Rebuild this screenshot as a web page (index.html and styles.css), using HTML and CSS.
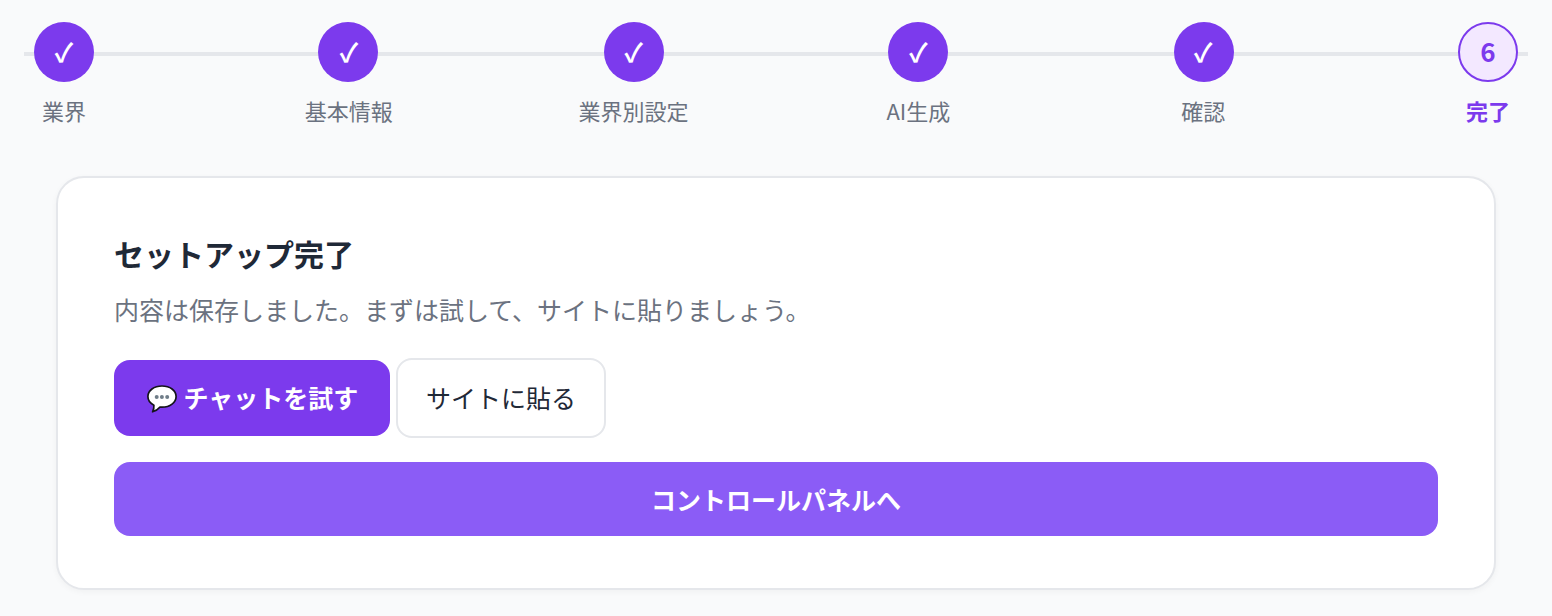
FILE: index.html
```html
<!DOCTYPE html>
<html lang="ja">
<head>
<meta charset="utf-8">
<title>セットアップ完了</title>
<link rel="stylesheet" href="styles.css">
</head>
<body>
<div class="page">
  <ol class="stepper">
    <li class="step done"><span class="dot">✓</span><span class="label">業界</span></li>
    <li class="step done"><span class="dot">✓</span><span class="label">基本情報</span></li>
    <li class="step done"><span class="dot">✓</span><span class="label">業界別設定</span></li>
    <li class="step done"><span class="dot">✓</span><span class="label">AI生成</span></li>
    <li class="step done"><span class="dot">✓</span><span class="label">確認</span></li>
    <li class="step active"><span class="dot">6</span><span class="label">完了</span></li>
  </ol>
  <section class="card">
    <h1 class="title">セットアップ完了</h1>
    <p class="desc">内容は保存しました。まずは試して、サイトに貼りましょう。</p>
    <div class="actions">
      <button class="btn btn-primary" type="button">
        <svg class="emoji" viewBox="0 0 30 30" width="30" height="30" aria-hidden="true">
          <path d="M15 3C7 3 .9 7.600 .9 13.600c0 3.900 2.500 6.900 6 8.600.2 2.200-.3 4.600-1.300 6.600 3-.8 5.600-2.400 7.400-4.700.7.100 1.300.1 2 .1 8 0 14.100-4.600 14.100-10.600S23 3 15 3z" fill="#fff" stroke="#14141a" stroke-width="1.700" stroke-linejoin="round"/>
          <circle cx="9.700" cy="14" r="2" fill="#6f7d88"/>
          <circle cx="14.900" cy="14" r="2" fill="#6f7d88"/>
          <circle cx="20.200" cy="14" r="2" fill="#6f7d88"/>
        </svg>
        <span>チャットを試す</span>
      </button>
      <button class="btn btn-outline" type="button">サイトに貼る</button>
    </div>
    <button class="btn btn-wide" type="button">コントロールパネルへ</button>
  </section>
</div>
</body>
</html>
```

FILE: styles.css
```css
* { box-sizing: border-box; }
html, body { margin: 0; padding: 0; }
body {
  background: #f9fafb;
  color: #1f2937;
  font-family: "Noto Sans CJK JP", "Noto Sans", sans-serif;
  height: 616px;
  overflow: hidden;
}
.page { padding: 22px 24px 0; }
.stepper {
  list-style: none;
  margin: 0;
  padding: 0;
  display: flex;
  justify-content: space-between;
  background: linear-gradient(#e5e7eb, #e5e7eb) no-repeat 0 30px / 100% 4px;
}
.step {
  width: 80px;
  display: flex;
  flex-direction: column;
  align-items: center;
  gap: 12px;
}
.dot {
  width: 60px;
  height: 60px;
  padding-bottom: 2px;
  border-radius: 50%;
  display: flex;
  align-items: center;
  justify-content: center;
  font-size: 26px;
  font-weight: 700;
  line-height: 1;
}
.step:nth-child(2) .dot { margin-left: -2px; padding-left: 2px; }
.step:nth-child(5) .dot { margin-left: 2px; padding-right: 2px; }
.done .dot { background: #7c3aed; color: #fff; }
.active .dot { background: #f3e8ff; color: #7c3aed; border: 2px solid #7c3aed; }
.label {
  font-size: 22px;
  line-height: 32px;
  color: #6b7280;
  white-space: nowrap;
}
.active .label { color: #7c3aed; font-weight: 700; }
.card {
  margin: 50px 32px 0;
  background: #fff;
  border: 2px solid #e5e7eb;
  border-radius: 28px;
  box-shadow: 0 2px 6px rgba(0,0,0,.04);
  padding: 53px 56px 52px;
}
.title {
  margin: 0;
  font-size: 30px;
  line-height: 44px;
  font-weight: 700;
  color: #1f2937;
}
.desc {
  margin: 16px 0 0;
  font-size: 25px;
  line-height: 36px;
  color: #6b7280;
}
.actions {
  display: flex;
  align-items: center;
  gap: 6px;
  margin-top: 31px;
}
.btn {
  font-family: inherit;
  font-size: 25px;
  border-radius: 16px;
  display: flex;
  align-items: center;
  justify-content: center;
  cursor: pointer;
}
.btn-primary {
  width: 276px;
  height: 76px;
  padding: 0 0 2px;
  gap: 7px;
  border: 0;
  background: #7c3aed;
  color: #fff;
  font-weight: 700;
}
.btn-outline {
  width: 210px;
  height: 80px;
  padding: 0 0 2px;
  background: #fff;
  border: 2px solid #e5e7eb;
  color: #1f2937;
}
.btn-wide {
  width: 100%;
  height: 74px;
  margin-top: 24px;
  border: 0;
  background: #8b5cf6;
  color: #fff;
  font-weight: 700;
}
.emoji { flex: none; margin: 2px 0 0 1px; }
```
